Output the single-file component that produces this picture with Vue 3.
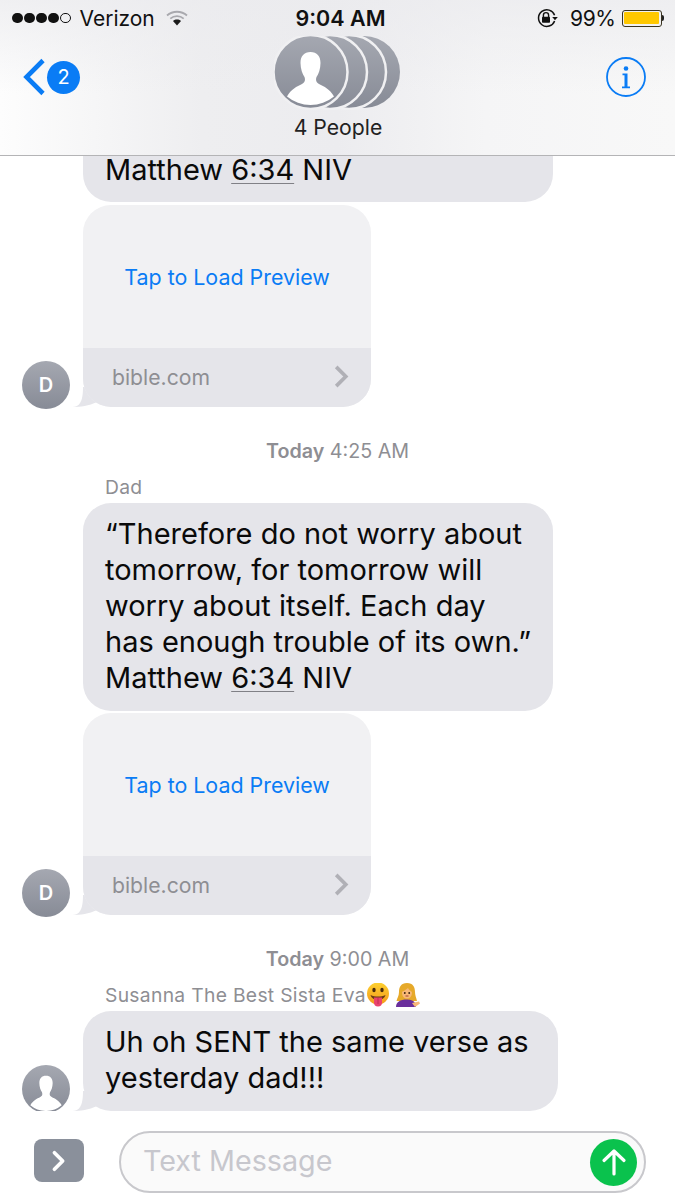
<script setup>
const TAP = 'Tap to Load Preview'
const PERSON = 'M36.5 16C43 16 46.5 20 46.5 27C46.5 33 44.5 38 42.5 41C41.5 44 42 46.5 45 48C50 50.5 56 53 60 60.5A36.7 36.700 0 0 1 13 60.5C17 53 23 50.5 28 48C31 46.5 31.5 44 30.5 41C28.5 38 26.5 33 26.5 27C26.5 20 30 16 36.5 16Z'
</script>

<template>
  <div class="phone">
    <header class="nav">
      <div class="status">
        <div class="status-left">
          <span class="dots"><i></i><i></i><i></i><i></i><i class="empty"></i></span>
          <span class="carrier">Verizon</span>
          <svg class="wifi" viewBox="0 0 22 16" width="22" height="16">
            <path d="M1 5.500C6.600.5 15.400.5 21 5.500" fill="none" stroke="#a9a9ae" stroke-width="1.800"/>
            <path d="M4.300 8.600c3.800-3.200 9.600-3.200 13.400 0" fill="none" stroke="#a9a9ae" stroke-width="1.800"/>
            <path d="M7 11c2.400-1.900 5.600-1.900 8 0l-4 4.600z" fill="#1a1a1a"/>
          </svg>
        </div>
        <div class="clock">9:04 AM</div>
        <div class="status-right">
          <svg class="lock" viewBox="0 0 22 20" width="22" height="20">
            <path d="M18.600 7.200A8.300 8.300 0 1 0 18.600 13" fill="none" stroke="#111" stroke-width="1.500"/>
            <path d="M16.200 9h5.600l-2.800 3.200z" fill="#111"/>
            <path d="M7.400 9V7.200a2.600 2.600 0 0 1 5.200 0V9" fill="none" stroke="#111" stroke-width="1.400"/>
            <rect x="6" y="8.800" width="8" height="6" rx=".8" fill="#111"/>
          </svg>
          <span class="pct">99%</span>
          <span class="battery"><span class="fill"></span></span>
          <span class="nub"></span>
        </div>
      </div>
      <div class="titlebar">
        <div class="back">
          <svg viewBox="0 0 24 38" width="24" height="38">
            <path d="M21 2.500 4.500 19 21 35.500" fill="none" stroke="#0a7cf5" stroke-width="4.600"/>
          </svg>
          <span class="badge">2</span>
        </div>
        <div class="group">
          <svg class="stack" viewBox="0 0 128 74" width="128" height="74">
            <defs>
              <linearGradient id="g" x1="0" y1="0" x2="0" y2="1">
                <stop offset="0" stop-color="#a5a8b1"/>
                <stop offset="1" stop-color="#878b96"/>
              </linearGradient>
            </defs>
            <circle cx="90" cy="36" r="36" fill="url(#g)"/>
            <circle cx="75" cy="36" r="37" fill="url(#g)" stroke="#f0f0f2" stroke-width="2.500"/>
            <circle cx="56" cy="36" r="37" fill="url(#g)" stroke="#f0f0f2" stroke-width="2.500"/>
            <circle cx="36.500" cy="36" r="37" fill="url(#g)" stroke="#f0f0f2" stroke-width="2.500"/>
            <path fill="#fff" :d="PERSON"/>
          </svg>
          <div class="people">4 People</div>
        </div>
        <svg class="info" viewBox="0 0 40 40" width="40" height="40">
          <circle cx="20" cy="20" r="19" fill="none" stroke="#0a7cf5" stroke-width="1.800"/>
          <circle cx="20" cy="11.500" r="2.300" fill="#0a7cf5"/>
          <path d="M16.500 16.500h5v13h2.500v1.800h-8v-1.800h2.500V18.300h-2z" fill="#0a7cf5"/>
        </svg>
      </div>
    </header>

    <main class="thread">
      <div class="indent">
        <div class="bubble w470 scrolled">Matthew <u>6:34</u> NIV</div>
      </div>
      <div class="row r-card">
        <div class="avatar">D</div>
        <div class="tailed">
          <div class="card">
            <div class="card-top">{{ TAP }}</div>
            <div class="card-foot">
              <span>bible.com</span>
              <svg viewBox="0 0 16 26" width="16" height="25"><path d="M3 3l10 10L3 23" fill="none" stroke="#b0b0b6" stroke-width="3.800"/></svg>
            </div>
          </div>
          <svg class="tail" viewBox="0 0 34 28" width="34" height="28"><path d="M0 28C6 27.500 10 24 10 8h14v15C16 27 7 28 0 28z" fill="#e5e5ea"/></svg>
        </div>
      </div>

      <div class="stamp s1"><b>Today</b> 4:25 AM</div>
      <div class="sender indent">Dad</div>
      <div class="indent">
        <div class="bubble w470">
          “Therefore do not worry about<br>tomorrow, for tomorrow will<br>worry about itself. Each day<br>has enough trouble of its own.”<br>Matthew <u>6:34</u> NIV
        </div>
      </div>
      <div class="row r-card r-card2">
        <div class="avatar">D</div>
        <div class="tailed">
          <div class="card">
            <div class="card-top">{{ TAP }}</div>
            <div class="card-foot">
              <span>bible.com</span>
              <svg viewBox="0 0 16 26" width="16" height="25"><path d="M3 3l10 10L3 23" fill="none" stroke="#b0b0b6" stroke-width="3.800"/></svg>
            </div>
          </div>
          <svg class="tail" viewBox="0 0 34 28" width="34" height="28"><path d="M0 28C6 27.500 10 24 10 8h14v15C16 27 7 28 0 28z" fill="#e5e5ea"/></svg>
        </div>
      </div>

      <div class="stamp s2"><b>Today</b> 9:00 AM</div>
      <div class="sender indent">
        Susanna The Best Sista Eva<svg class="emoji" viewBox="0 0 24 24" width="24" height="24">
          <defs>
            <linearGradient id="f" x1="0" y1="0" x2="0" y2="1">
              <stop offset="0" stop-color="#fdd02f"/>
              <stop offset="1" stop-color="#f49a1c"/>
            </linearGradient>
          </defs>
          <circle cx="12" cy="10.500" r="11" fill="url(#f)"/>
          <ellipse cx="8" cy="7" rx="1.700" ry="2.300" fill="#4a2a0c"/>
          <ellipse cx="16" cy="7" rx="1.700" ry="2.300" fill="#4a2a0c"/>
          <path d="M4.500 12c4.500 2 10.500 2 15 0-1 3.500-4 5-7.500 5s-6.500-1.500-7.500-5z" fill="#6b3a14"/>
          <path d="M8 14.500h8v5a4 4 0 0 1-8 0z" fill="#e9436e"/>
          <path d="M12 15v6" stroke="#b52a52" stroke-width=".8"/>
        </svg><svg class="emoji2" viewBox="0 0 26 24" width="26" height="24">
          <path d="M13 0C7 0 5 4 5 9 5 13 3 15 2.500 18H23C22 14 21 12 21 9 21 4 19 0 13 0z" fill="#e6a92a"/>
          <ellipse cx="13" cy="10" rx="5" ry="5.600" fill="#f8b878"/>
          <path d="M7.500 9C9 8 12 7 14 5c1 2 3 3.500 4.500 4L19 5 13 2 7 5z" fill="#e6a92a"/>
          <circle cx="10.800" cy="10" r=".9" fill="#3a200a"/>
          <circle cx="15.200" cy="10" r=".9" fill="#3a200a"/>
          <path d="M11.500 13h3" stroke="#a8402c" stroke-width="1"/>
          <path d="M2 24c0-5 4-7.500 11-7.500 4 0 7 1.500 8 3.500l1 4z" fill="#6a2f9c"/>
          <path d="M18 20l7-1.500 1 2L21 24z" fill="#f8b878"/>
        </svg>
      </div>
      <div class="row">
        <div class="avatar person">
          <svg viewBox="0.500 0 72 72" width="48" height="48">
            <path fill="#fff" :d="PERSON"/>
          </svg>
        </div>
        <div class="tailed">
          <div class="bubble w475">Uh oh SENT the same verse as<br>yesterday dad!!!</div>
          <svg class="tail" viewBox="0 0 34 28" width="34" height="28"><path d="M0 28C6 27.500 10 24 10 8h14v15C16 27 7 28 0 28z" fill="#e5e5ea"/></svg>
        </div>
      </div>
    </main>

    <footer class="composer">
      <div class="expand">
        <svg viewBox="0 0 16 24" width="16" height="22"><path d="M3 3l9 9-9 9" fill="none" stroke="#fff" stroke-width="4" stroke-linecap="round" stroke-linejoin="round"/></svg>
      </div>
      <div class="field">
        <span class="placeholder">Text Message</span>
        <span class="send">
          <svg viewBox="0 0 28 30" width="28" height="30">
            <path d="M14 27V4M4 13.500 14 4l10 9.500" fill="none" stroke="#fff" stroke-width="3.200" stroke-linecap="round" stroke-linejoin="round"/>
          </svg>
        </span>
      </div>
    </footer>
  </div>
</template>

<style scoped>
.phone {
  width: 675px;
  height: 1200px;
  display: flex;
  flex-direction: column;
  overflow: hidden;
  background: #fff;
  font-family: Inter, "Liberation Sans", sans-serif;
  color: #000;
}

/* header */
.nav {
  flex: none;
  height: 156px;
  box-sizing: border-box;
  border-bottom: 1px solid #b4b4b6;
  background:
    linear-gradient(180deg, rgba(235,235,238,.75) 0, rgba(255,255,255,0) 60%),
    linear-gradient(90deg, #fdfdfd 0, #eeeef0 30%, #ececef 50%, #f5f5f6 72%, #f8f8f8 100%);
}
.status {
  height: 36px;
  display: grid;
  grid-template-columns: 1fr auto 1fr;
  align-items: center;
  font-size: 21px;
  color: #111;
}
.status-left { display: flex; align-items: center; padding-left: 12px; }
.dots { display: flex; gap: 1.500px; }
.dots i { width: 10.500px; height: 10.500px; border-radius: 50%; background: #111; box-sizing: border-box; }
.dots i.empty { background: transparent; border: 1.200px solid #111; }
.carrier { margin-left: 9px; }
.wifi { margin-left: 11px; }
.clock { font-weight: 600; font-size: 21.500px; margin-left: 6px; }
.status-right { display: flex; align-items: center; justify-content: flex-end; padding-right: 11px; }
.pct { margin-left: 12px; letter-spacing: -.4px; }
.battery {
  margin-left: 6px;
  width: 40px;
  height: 17px;
  box-sizing: border-box;
  border: 1.500px solid #3a3420;
  border-radius: 3px;
  padding: 1.500px;
  display: flex;
}
.fill { flex: 1; background: #ffc800; border-radius: 1px; }
.nub { width: 2.500px; height: 6px; background: #222; border-radius: 0 2px 2px 0; }

.titlebar {
  position: relative;
  height: 119px;
  display: flex;
  justify-content: space-between;
}
.back { display: flex; align-items: center; gap: 1px; height: 82px; padding-left: 22px; }
.badge {
  width: 33px;
  height: 33px;
  border-radius: 50%;
  background: #0a7cf5;
  color: #fff;
  font-size: 20px;
  display: flex;
  align-items: center;
  justify-content: center;
}
.group {
  position: absolute;
  left: 274px;
  top: 0;
  width: 128px;
}
.stack { display: block; }
.people { margin-top: 5px; text-align: center; font-size: 21.200px; line-height: 24px; color: #222; white-space: nowrap; }
.info { margin: 21px 29px 0 0; }

/* thread */
.thread {
  flex: 1;
  min-height: 0;
  display: flex;
  flex-direction: column;
  justify-content: flex-end;
  overflow: hidden;
}
.indent { padding-left: 83px; flex: none; }
.row { flex: none; display: flex; align-items: flex-end; padding-left: 22px; gap: 13px; }
.r-card { margin-top: 3px; }
.r-card2 { margin-top: 2px; }
.avatar {
  flex: none;
  width: 48px;
  height: 48px;
  margin-bottom: -2px;
  border-radius: 50%;
  background: linear-gradient(180deg, #a5a8b1, #878b96);
  color: #fff;
  font-size: 20px;
  font-weight: 600;
  display: flex;
  align-items: center;
  justify-content: center;
  overflow: hidden;
}
.person svg { display: block; }
.tailed { position: relative; }
.tail { position: absolute; left: -10px; bottom: 0; display: block; }
.bubble {
  box-sizing: border-box;
  background: #e5e5ea;
  border-radius: 28px;
  padding: 13px 0 15px 22px;
  font-size: 29px;
  line-height: 36px;
  white-space: nowrap;
  color: #0a0a0a;
}
.scrolled { padding-top: 60px; padding-bottom: 19px; line-height: 26px; }
.bubble u { text-decoration-color: #808086; text-decoration-thickness: 1px; text-underline-offset: 3px; }
.w470 { width: 470px; }
.w475 { width: 475px; position: relative; }
.card { position: relative; width: 288px; height: 202px; border-radius: 28px; overflow: hidden; background: #f1f1f3; z-index: 1; }
.card-top {
  height: 143px;
  display: flex;
  align-items: center;
  justify-content: center;
  color: #0a7cf5;
  font-size: 21.400px;
}
.card-foot {
  height: 59px;
  box-sizing: border-box;
  padding: 0 22px 2px 29px;
  background: #e5e5ea;
  display: flex;
  align-items: center;
  justify-content: space-between;
  color: #8e8e93;
  font-size: 21.200px;
}
.stamp {
  flex: none;
  text-align: center;
  color: #8e8e93;
  font-size: 19.700px;
  line-height: 24px;
}
.stamp b { font-weight: 600; }
.s1 { margin-top: 32px; }
.s2 { margin-top: 32px; }
.sender {
  flex: none;
  height: 24px;
  margin-top: 12px;
  margin-bottom: 4px;
  font-size: 19.300px;
  letter-spacing: .3px;
  line-height: 24px;
  color: #8e8e93;
  display: flex;
  align-items: center;
  padding-left: 105px;
}
.emoji { margin-left: 0; }
.emoji2 { margin-left: 4px; }

/* composer */
.composer {
  flex: none;
  height: 89px;
  box-sizing: border-box;
  padding: 20px 29px 8px 34px;
  display: flex;
  align-items: flex-start;
  gap: 35px;
}
.expand {
  flex: none;
  width: 50px;
  height: 43px;
  margin-top: 8px;
  border-radius: 8px;
  background: #8a909b;
  display: flex;
  align-items: center;
  justify-content: center;
}
.field {
  flex: 1;
  height: 62px;
  box-sizing: border-box;
  border: 2px solid #c8c8cc;
  border-radius: 31px;
  background: #fafafa;
  display: flex;
  align-items: center;
  justify-content: space-between;
  padding: 0 7px 0 22px;
}
.placeholder { font-size: 28.700px; line-height: 34px; margin-top: -2px; color: #c7c7cd; }
.send {
  width: 47px;
  height: 47px;
  border-radius: 50%;
  background: #0ac24d;
  display: flex;
  align-items: center;
  justify-content: center;
}
</style>
